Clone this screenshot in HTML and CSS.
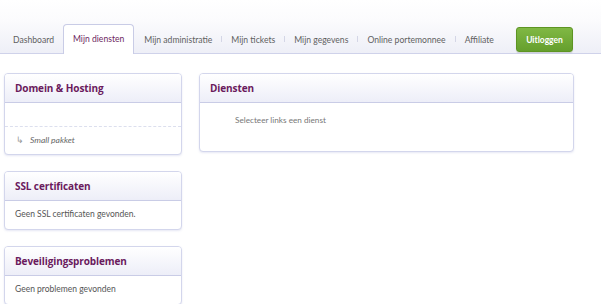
FILE: index.html
```html
<!DOCTYPE html>
<html lang="nl">
<head>
    <meta charset="UTF-8">
    <meta name="viewport" content="width=device-width, initial-scale=1.0">
    <title>Mijn diensten</title>
    <link rel="stylesheet" href="styles.css">
</head>
<body>
    <div class="topbar">
        <ul class="tabs">
            <li class="tab">Dashboard</li>
            <li class="tab active">Mijn diensten</li>
            <li class="tab">Mijn administratie</li>
            <li class="sep"></li>
            <li class="tab">Mijn tickets</li>
            <li class="sep"></li>
            <li class="tab">Mijn gegevens</li>
            <li class="sep"></li>
            <li class="tab">Online portemonnee</li>
            <li class="sep"></li>
            <li class="tab">Affiliate</li>
        </ul>
        <button class="logout">Uitloggen</button>
    </div>

    <div class="content">
        <div class="sidebar">
            <div class="panel">
                <div class="panel-head"><h3>Domein &amp; Hosting</h3></div>
                <div class="panel-row empty"></div>
                <div class="panel-row sub"><span class="arrow">&#8627;</span> Small pakket</div>
            </div>

            <div class="panel">
                <div class="panel-head"><h3>SSL certificaten</h3></div>
                <div class="panel-text">Geen SSL certificaten gevonden.</div>
            </div>

            <div class="panel">
                <div class="panel-head"><h3>Beveiligingsproblemen</h3></div>
                <div class="panel-text">Geen problemen gevonden</div>
            </div>
        </div>

        <div class="main">
            <div class="panel">
                <div class="panel-head"><h3>Diensten</h3></div>
                <div class="panel-body">Selecteer links een dienst</div>
            </div>
        </div>
    </div>
</body>
</html>
```

FILE: styles.css
```css
body {
    margin: 0;
    font-family: Lato, "Open Sans", sans-serif;
    background-color: #fff;
    color: #555;
}

/* Balk bovenaan met tabs */
.topbar {
    height: 53px;
    background: linear-gradient(to bottom, #ffffff 0%, #fbfbfd 40%, #eeeff7 100%);
    border-bottom: 1px solid #cfd2ea;
    display: flex;
    align-items: flex-end;
    padding-left: 4px;
}
.tabs {
    list-style: none;
    margin: 0 0 -1px 0;
    padding: 0;
    display: flex;
    align-items: center;
    height: 30px;
    flex-shrink: 0;
}
.tab {
    font-size: 8.6px;
    color: #5f5f5f;
    padding: 0 9px;
    height: 29px;
    line-height: 30px;
    white-space: nowrap;
    box-sizing: border-box;
}
.tab.active {
    background-color: #fff;
    color: #6d1f5f;
    border: 1px solid #c9cce6;
    border-bottom: none;
    border-radius: 4px 4px 0 0;
    padding: 0 9px;
    margin: 0 1px 0 0;
    line-height: 28px;
    height: 30px;
    align-self: flex-end;
}
.sep {
    width: 1px;
    height: 6px;
    background-color: #d4d6e6;
    flex-shrink: 0;
}
.logout {
    margin-left: auto;
    margin-right: 28px;
    margin-bottom: 1px;
    width: 57px;
    height: 25px;
    padding: 0;
    border: 1px solid #5d9423;
    border-radius: 3px;
    background: linear-gradient(to bottom, #80b844, #659f2d);
    color: #fff;
    font-family: Lato, sans-serif;
    font-weight: bold;
    font-size: 8.5px;
    box-shadow: 0 1px 1px rgba(0, 0, 0, 0.15);
    flex-shrink: 0;
}

/* Inhoud */
.content {
    display: flex;
    gap: 17px;
    padding: 19px 0 0 4px;
}
.sidebar {
    width: 178px;
    display: flex;
    flex-direction: column;
    gap: 16px;
}
.main {
    width: 375px;
}
.panel {
    border: 1px solid #d3d6ec;
    border-radius: 4px;
    background-color: #fff;
    box-shadow: 0 1px 2px rgba(160, 165, 210, 0.25);
    overflow: hidden;
}
.panel-head {
    height: 28px;
    background: linear-gradient(to bottom, #ffffff, #edeef8);
    border-bottom: 1px solid #c9cce6;
    padding: 0 10px;
    display: flex;
    align-items: center;
}
.panel-head h3 {
    margin: 0;
    font-family: "Open Sans", sans-serif;
    font-size: 10px;
    font-weight: bold;
    color: #6a1a5d;
    letter-spacing: -0.1px;
}
.panel-row.empty {
    height: 23px;
    border-bottom: 1px dashed #dcdfee;
}
.panel-row.sub {
    height: 27px;
    line-height: 26px;
    padding-left: 11px;
    font-size: 8.5px;
    font-style: italic;
    color: #666;
}
.arrow {
    font-style: normal;
    color: #999;
    margin-right: 4px;
}
.panel-text {
    font-size: 8.5px;
    color: #555;
    padding: 0 10px;
    height: 28px;
    line-height: 26px;
}
.panel-body {
    height: 48px;
    padding: 7px 0 0 35px;
    box-sizing: border-box;
    font-size: 8.2px;
    color: #777;
    line-height: 20px;
}
```
